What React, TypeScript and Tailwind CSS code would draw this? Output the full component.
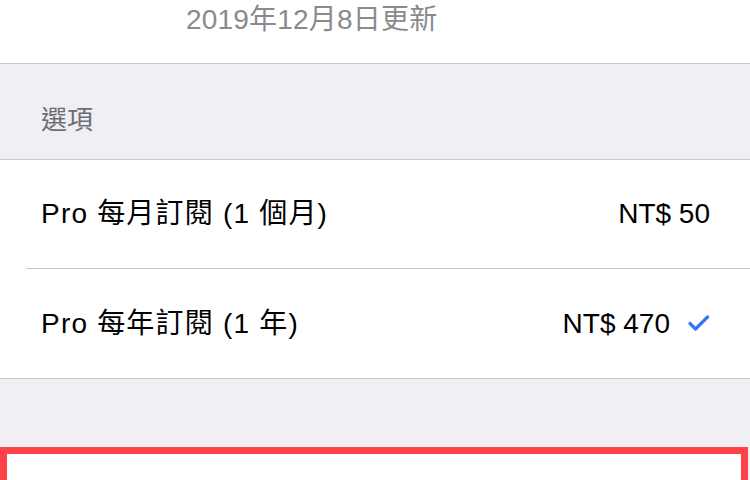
import React from 'react';

const font = { fontFamily: '"Liberation Sans", "Noto Sans CJK TC", sans-serif' };

const plans = [
  { name: 'Pro 每月訂閱 (1 個月)', price: 'NT$ 50', selected: false },
  { name: 'Pro 每年訂閱 (1 年)', price: 'NT$ 470', selected: true },
];

const Check = () => (
  <svg width="22" height="18" viewBox="0 0 22 18" className="ml-[18px]">
    <path d="M2 8.5 L7.5 14 L19.5 2" fill="none" stroke="#3478f6" strokeWidth="3.2" strokeLinecap="round" strokeLinejoin="round" />
  </svg>
);

const App = () => {
  return (
    <div className="w-[750px] h-[480px] overflow-hidden bg-[#efeff4]" style={font}>
      <div className="h-[64px] bg-white border-b border-[#c8c7cc] pl-[186px]">
        <p className="text-[28px] leading-[34px] text-[#8a8a8e] pt-[3px] tracking-[0.2px]">2019年12月8日更新</p>
      </div>

      <div className="h-[95px] flex items-center pl-[41px] pt-[18px]">
        <span className="text-[26px] text-[#6d6d72]">選項</span>
      </div>

      <div className="bg-white border-t border-b border-[#c8c7cc] pl-[26px]">
        {plans.map((plan, i) => (
          <div
            key={plan.name}
            className={`h-[109px] flex items-center justify-between pl-[15px] pr-[40px] ${i === 0 ? 'border-b border-[#c8c7cc]' : ''}`}
          >
            <span className="text-[28px] text-black tracking-[1.2px]">{plan.name}</span>
            <div className="flex items-center">
              <span className="text-[28px] text-black">{plan.price}</span>
              {plan.selected && <Check />}
            </div>
          </div>
        ))}
      </div>

      <div className="h-[68px]" />

      <div className="w-[748px] h-[40px] bg-white border-[7px] border-b-0 border-[#ff4148]" />
    </div>
  );
};

export default App;
